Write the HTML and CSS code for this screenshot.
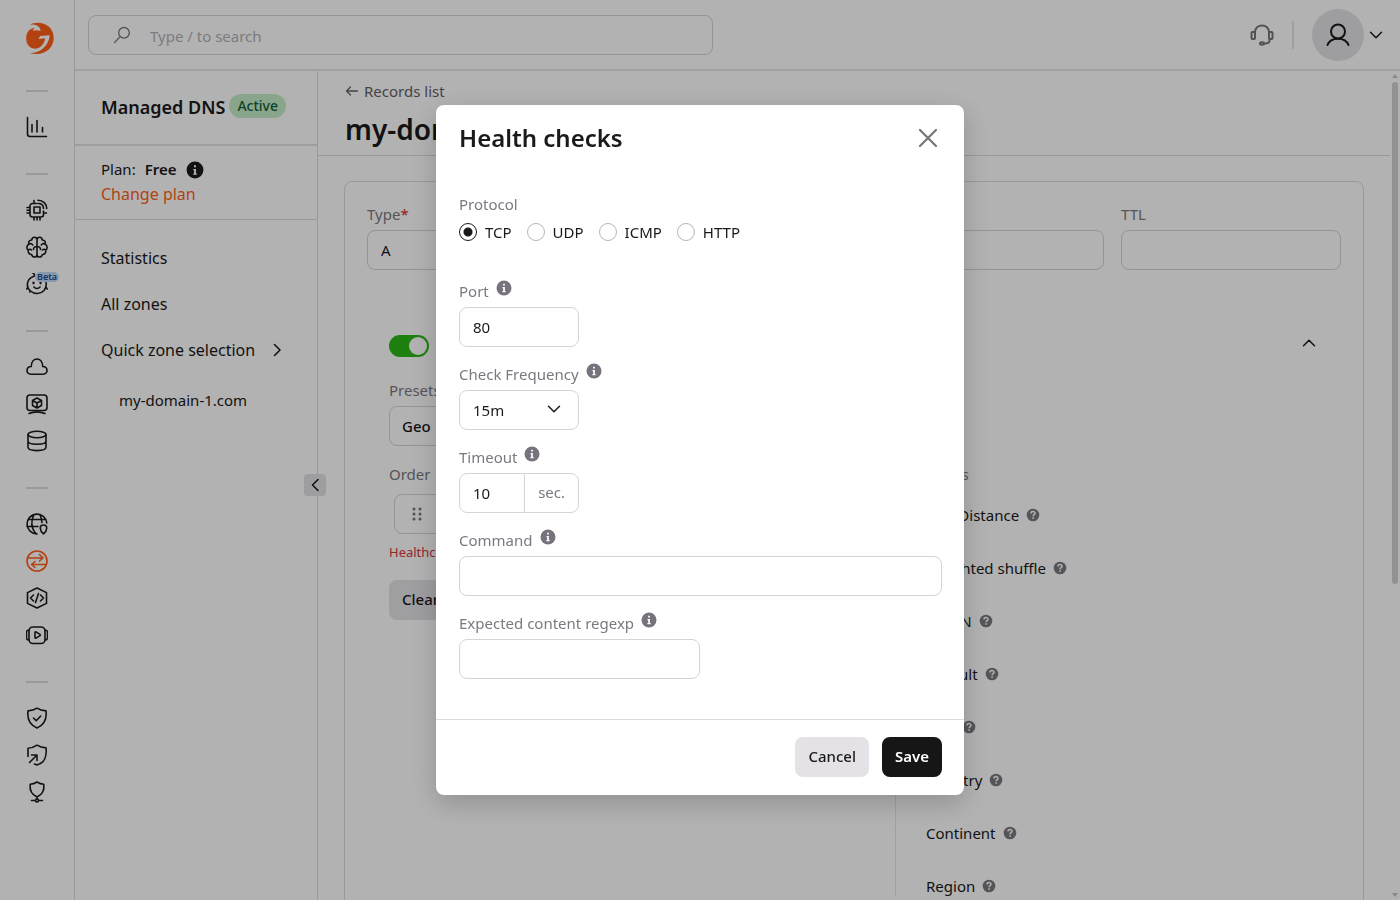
FILE: index.html
```html
<!DOCTYPE html>
<html lang="en">
<head>
<meta charset="utf-8">
<meta name="viewport" content="width=device-width, initial-scale=1">
<title>Managed DNS</title>
<link rel="stylesheet" href="styles.css">
</head>
<body>
<svg class="sprite" aria-hidden="true">
  <symbol id="info" viewBox="0 0 16 16"><circle cx="8" cy="8" r="7.500" fill="currentColor"/><path d="M7.100 3.800h1.800v1.700H7.100zM6.500 7h2.400v4h.7v1.200H6.400V11h.8V8.200h-.7z" fill="#fff"/></symbol>
  <symbol id="help" viewBox="0 0 14 14"><circle cx="7" cy="7" r="6.300" fill="currentColor"/><path d="M5 5.500c0-2.500 4-2.500 4-.2 0 1.300-1.900 1.400-1.900 2.900" fill="none" stroke="#fff" stroke-width="1.500"/><path d="M6.300 9.200h1.600v1.500H6.300z" fill="#fff"/></symbol>
  <symbol id="down" viewBox="0 0 14 14"><path d="M1.500 4.300 7 9.800l5.500-5.500" fill="none" stroke="currentColor" stroke-width="1.500" stroke-linecap="round" stroke-linejoin="round"/></symbol>
</svg>

<div class="app">
  <nav class="rail" aria-label="Products">
    <a class="logo" href="#" aria-label="Home">
      <svg width="30" height="34" viewBox="0 0 30 34"><path d="M4 3.800C14-1.500 28.700 3 28.700 17 28.700 28 18 36 4.500 32 15 32.500 23.500 25 24.800 14.200L15 15l-1.500 3 6.700-.8C19 25 13 28.500 8.500 27.500 3.500 26.500 1.200 22 1.200 17.500 1.200 11.500 4.500 7.500 9.500 6.800c-1 1-1.500 2-1.500 3 2.500-.8 5-.8 7.500.2C15.500 5.500 11 2.800 4 3.800z" fill="#ff5f18"/></svg>
    </a>
    <hr>
    <div class="group">
      <a href="#" aria-label="Reports"><svg viewBox="0 0 22 22"><path d="M1.500 1.500V18a2.500 2.500 0 0 0 2.500 2.500h16.500M6 8.500V16M11 4.500V16M16.500 11.500V16"/></svg></a>
    </div>
    <hr>
    <div class="group">
      <a href="#" aria-label="Edge compute"><svg viewBox="0 0 22 22"><path d="M10.500 4.500H6.500a2.500 2.500 0 0 0-2.500 2.500v8.500A2.500 2.500 0 0 0 6.500 18h8.500a2.500 2.500 0 0 0 2.500-2.500V12M8 8h6v6H8zM1 8.500h3M1 11.300h3M1 14h3M8 18v3M11 18v3M14 18v3M8 1.500v3M17.500 14h3M12 1.300c5 0 8.700 3.500 8.700 8.200M12 4.500c3.300 0 5.500 2 5.500 5"/></svg></a>
      <a href="#" aria-label="AI"><svg viewBox="0 0 22 22"><path d="M11 3.500C10.500.5 6 .5 5.800 4 3 4 2 6.500 3.200 8 0 9.500.5 13 2.300 14c-.5 3 1.200 4.500 3.300 4.500.9 3.500 5.400 3.200 5.400 0zM11 3.500C11.500.5 16 .5 16.200 4 19 4 20 6.500 18.800 8c3.200 1.500 2.700 5 .9 6 .5 3-1.200 4.500-3.300 4.500-.9 3.500-5.400 3.200-5.400 0zM3.200 8c1.500-.8 3-.2 3.500 1M18.800 8c-1.500-.8-3-.2-3.500 1M11 10.500c-2 0-3.500 1-3.500 3M11 10.500c2 0 3.500 1 3.500 3M2.300 14c1.200-1 2.500-.8 3.200 0M19.700 14c-1.200-1-2.500-.8-3.200 0"/></svg></a>
      <a href="#" aria-label="Everywhere inference" class="has-beta"><svg viewBox="0 0 22 22"><path d="M8 3.200C.5 5.500-.5 14 4.500 18c4 3.600 10 3.300 13.500-.5 2-2.500 2.700-5 2-8M8 3.200C9 2.500 8.200.5 7 .2M1.800 14.500.8 16M4.500 18l-.8 1M20.200 14.500l1 1.500M8 14c1.500 2 4.500 2 6 0"/><path d="M7.500 9.500v.8M14.500 9.500v.8" stroke-width="2.200"/></svg><span class="beta">Beta</span></a>
    </div>
    <hr>
    <div class="group">
      <a href="#" aria-label="Cloud"><svg viewBox="0 0 22 22"><path d="M5 18.200c-5.500 0-5.300-7.500.3-7.700C5.500.5 16.500.5 16.700 10.500c5.600.2 5.800 7.700.3 7.700z"/></svg></a>
      <a href="#" aria-label="Virtual machines"><svg viewBox="0 0 22 22"><rect x="1" y="2" width="20" height="15.500" rx="3"/><path d="M3 20.500c5-2 11-2 16 0M11 5l4.500 2.500v5L11 15l-4.500-2.500v-5zM6.500 7.500 11 10l4.500-2.500M11 10v5"/></svg></a>
      <a href="#" aria-label="Storage"><svg viewBox="0 0 22 22"><ellipse cx="11" cy="4.500" rx="9" ry="3.300"/><path d="M2 4.500v12.800c0 4.400 18 4.400 18 0V4.500M2 11c0 4.400 18 4.400 18 0"/></svg></a>
    </div>
    <hr>
    <div class="group">
      <a href="#" aria-label="CDN"><svg viewBox="0 0 22 22"><path d="M20.800 10A9.900 9.900 0 1 0 11 20.900M2.500 6.500h17M1 13.500h11M8 1.500c-3 6-3 13 1.500 19M14 1.500c1 2.500 1.800 5 1.900 8"/><path d="M17.500 12c4.600 0 4 5.500 0 8.800-4-3.300-4.600-8.800 0-8.800z"/></svg></a>
      <a href="#" aria-label="Managed DNS" class="current"><svg viewBox="0 0 22 22"><circle cx="11" cy="11" r="10"/><path d="M2.500 8h14.500M13.500 4.500 17 8l-3.500 3M19.500 14.500H5.500M9 11.500l-3.500 3L9 17.500"/></svg></a>
      <a href="#" aria-label="FastEdge"><svg viewBox="0 0 22 22"><path d="M11 1 20.500 5.600v10.800L11 21 1.500 16.400V5.600zM7.500 8l-3 3 3 3M14.500 8l3 3-3 3M12.500 6.500l-3 9"/></svg></a>
      <a href="#" aria-label="Streaming"><svg viewBox="0 0 22 22"><rect x="3" y="3" width="16" height="16.500" rx="4"/><path d="M3 6C0 6 .5 8 .5 11s-.5 5 2.500 5M19 6c3 0 2.500 2 2.500 5s.5 5-2.500 5M9 8.500c0-.6.500-.9 1-.6l4 2.500c.5.300.5.900 0 1.200l-4 2.500c-.5.300-1 0-1-.6z"/></svg></a>
    </div>
    <hr>
    <div class="group">
      <a href="#" aria-label="Web protection"><svg viewBox="0 0 22 22"><path d="M11 1.200c2.800 1.800 5.800 2.500 9 2.700 1 8.200-1.500 14-9 17-7.500-3-10-8.800-9-17 3.200-.2 6.200-.9 9-2.700zM7.500 11l2.700 2.700 4.500-4.700"/></svg></a>
      <a href="#" aria-label="DDoS protection"><svg viewBox="0 0 22 22"><path d="M2 12.500V4.200c3.200 0 6-.9 9-3 2.800 1.800 5.800 2.500 9 2.700 1 8.200-1.500 15.500-9 17l-2.500-.9M3.500 18.500l7.500-7.500M5.500 11H11v5.500"/></svg></a>
      <a href="#" aria-label="Network protection"><svg viewBox="0 0 22 22"><path d="M11 1c2.200 1.500 4 2.200 6.800 2.300.8 6-1.500 10.200-6.800 12.700-5.300-2.500-7.600-6.700-6.800-12.700C7 3.200 8.800 2.500 11 1zM11 16v2M5.500 19.500h3.800M12.700 19.500h3.800"/><circle cx="11" cy="19.500" r="1.500"/></svg></a>
    </div>
  </nav>

  <div class="workspace">
    <header class="topbar">
      <label class="search">
        <svg width="18" height="18" viewBox="0 0 18 18"><circle cx="11" cy="6.800" r="5.300"/><path d="M7.200 10.600 1.500 16.500"/></svg>
        <input type="search" placeholder="Type / to search" aria-label="Search">
      </label>
      <div class="tools">
        <button class="plain" aria-label="Support"><svg class="headset" width="24" height="24" viewBox="0 0 24 24"><path d="M5 9.500C4.500.2 19.500.2 19 9.500M19.500 16v1.500c0 2.500-2 3-5 3"/><rect x="1.500" y="9" width="3.500" height="7" rx="1"/><rect x="19" y="9" width="3.500" height="7" rx="1"/><ellipse cx="12" cy="20.500" rx="2" ry="1.200"/></svg></button>
        <span class="rule"></span>
        <button class="plain account" aria-label="Account">
          <span class="avatar"><svg width="24" height="24" viewBox="0 0 24 24"><circle cx="12" cy="8.500" r="7"/><path d="M1.500 22c3-8.500 18-8.500 21 0"/></svg></span>
          <svg width="14" height="14"><use href="#down"/></svg>
        </button>
      </div>
    </header>

    <div class="columns">
      <aside class="sidebar">
        <div class="product"><h2>Managed DNS</h2><span class="status">Active</span></div>
        <div class="plan">
          <p>Plan: <strong>Free</strong><svg width="18" height="18"><use href="#info"/></svg></p>
          <a href="#">Change plan</a>
        </div>
        <ul class="menu">
          <li><a href="#">Statistics</a></li>
          <li><a href="#">All zones</a></li>
          <li><a href="#">Quick zone selection <svg width="14" height="14" viewBox="0 0 14 14"><path d="m4.500 1.500 5.500 5.500-5.500 5.500"/></svg></a></li>
          <li class="child"><a href="#">my-domain-1.com</a></li>
        </ul>
        <button class="collapse" aria-label="Collapse menu"><svg width="14" height="14" viewBox="0 0 14 14"><path d="M10 1.500 4.500 7l5.500 5.500"/></svg></button>
      </aside>

      <main class="main">
        <div class="page-head">
          <a href="#"><svg width="14" height="12" viewBox="0 0 14 12"><path d="M12.500 6H1.500M5.500 2l-4 4 4 4"/></svg>Records list</a>
          <h1>my-domain-1.com</h1>
        </div>
        <section class="card">
          <div class="record">
            <div class="field"><label for="type">Type<b>*</b></label><input id="type" value="A"></div>
            <div class="field"><label for="name">Name</label><input id="name"></div>
            <div class="field"><label for="ttl">TTL</label><input id="ttl"></div>
          </div>
          <div class="balancing">
            <div class="balancing-head">
              <label class="toggle"><input type="checkbox" checked aria-label="Advanced load balancing"><span></span></label>
              <button class="plain" aria-label="Collapse"><svg class="up" width="14" height="14"><use href="#down"/></svg></button>
            </div>
            <div class="panes">
              <div class="pane">
                <div class="field"><label for="preset">Presets</label><input id="preset" class="medium" value="Geo"></div>
                <span class="caption">Order</span>
                <div class="drag"><svg width="10" height="14" viewBox="0 0 10 14"><circle cx="2" cy="2" r="1.500"/><circle cx="8" cy="2" r="1.500"/><circle cx="2" cy="7" r="1.500"/><circle cx="8" cy="7" r="1.500"/><circle cx="2" cy="12" r="1.500"/><circle cx="8" cy="12" r="1.500"/></svg></div>
                <p class="error">Healthchecks</p>
                <button class="soft">Clear</button>
              </div>
              <div class="pane filters">
                <span class="caption">Filters</span>
                <ul>
                  <li>Geo Distance<svg width="14" height="14"><use href="#help"/></svg></li>
                  <li>Weighted shuffle<svg width="14" height="14"><use href="#help"/></svg></li>
                  <li>First N<svg width="14" height="14"><use href="#help"/></svg></li>
                  <li>Default<svg width="14" height="14"><use href="#help"/></svg></li>
                  <li>ASN<svg width="14" height="14"><use href="#help"/></svg></li>
                  <li>Country<svg width="14" height="14"><use href="#help"/></svg></li>
                  <li>Continent<svg width="14" height="14"><use href="#help"/></svg></li>
                  <li>Region<svg width="14" height="14"><use href="#help"/></svg></li>
                </ul>
              </div>
            </div>
          </div>
        </section>
      </main>
      <div class="scrollbar" aria-hidden="true"><i class="arrow-up"></i><i class="thumb"></i><i class="arrow-down"></i></div>
    </div>
  </div>
</div>

<div class="overlay">
  <form class="modal" role="dialog" aria-labelledby="modal-title">
    <header>
      <h2 id="modal-title">Health checks</h2>
      <button type="button" class="plain" aria-label="Close"><svg width="20" height="20" viewBox="0 0 20 20"><path d="m2 2 16 16M18 2 2 18"/></svg></button>
    </header>
    <div class="body">
      <fieldset>
        <legend>Protocol</legend>
        <div class="radios">
          <label><input type="radio" name="protocol" checked>TCP</label>
          <label><input type="radio" name="protocol">UDP</label>
          <label><input type="radio" name="protocol">ICMP</label>
          <label><input type="radio" name="protocol">HTTP</label>
        </div>
      </fieldset>
      <div class="field small"><label for="port">Port<svg width="16" height="16"><use href="#info"/></svg></label><input id="port" value="80"></div>
      <div class="field small"><label for="freq">Check Frequency<svg width="16" height="16"><use href="#info"/></svg></label>
        <div class="select"><select id="freq"><option>15m</option></select><svg width="14" height="14"><use href="#down"/></svg></div></div>
      <div class="field small"><label for="timeout">Timeout<svg width="16" height="16"><use href="#info"/></svg></label>
        <div class="unit"><input id="timeout" value="10"><span>sec.</span></div></div>
      <div class="field"><label for="command">Command<svg width="16" height="16"><use href="#info"/></svg></label><input id="command"></div>
      <div class="field half"><label for="regexp">Expected content regexp<svg width="16" height="16"><use href="#info"/></svg></label><input id="regexp"></div>
    </div>
    <footer><button type="button" class="soft">Cancel</button><button type="button" class="solid">Save</button></footer>
  </form>
</div>
</body>
</html>
```
FILE: styles.css
```css
:root {
  --ink: #1a1a1a;
  --muted: #7b7980;
  --line: #dcdcde;
  --accent: #ff5f18;
}
* { box-sizing: border-box; }
body, h1, h2, p, ul { margin: 0; padding: 0; }
ul { list-style: none; }
body {
  font: 15px/20px "Noto Sans", sans-serif;
  color: var(--ink);
  background: #fff;
}
a { color: inherit; text-decoration: none; }
button, input, select { font: inherit; color: inherit; }
svg { flex: none; display: block; }
.sprite { position: absolute; width: 0; height: 0; }
.plain { border: 0; background: none; padding: 0; display: flex; align-items: center; }

.app { display: flex; height: 100vh; overflow: hidden; }

/* product rail */
.rail {
  width: 75px;
  flex: none;
  border-right: 1px solid var(--line);
  padding-top: 21px;
  display: flex;
  flex-direction: column;
  align-items: center;
}
.rail hr { width: 22px; height: 2px; border: 0; background: var(--line); margin: 35px 0 24px; flex: none; }
.logo { margin-left: 5px; }
.group { display: flex; flex-direction: column; gap: 15px; }
.group svg { width: 22px; height: 22px; }
.group svg, .headset, .avatar svg, .search svg, .menu svg, .collapse svg, .page-head svg, .modal header svg {
  fill: none;
  stroke: currentColor;
  stroke-width: 1.6;
  stroke-linecap: round;
  stroke-linejoin: round;
}
.current { color: var(--accent); }
.has-beta { position: relative; }
.beta {
  position: absolute;
  left: 9px;
  top: -1px;
  padding: 0 2px;
  border-radius: 5px;
  background: #c3dcf9;
  color: #1c4c8c;
  font-size: 9px;
  line-height: 10px;
  font-weight: 600;
}

/* top bar */
.workspace { flex: 1; min-width: 0; display: flex; flex-direction: column; }
.topbar {
  display: flex;
  align-items: center;
  justify-content: space-between;
  height: 71px;
  padding: 0 17px 0 13px;
  border-bottom: 2px solid #e6e6e8;
}
.search {
  display: flex;
  align-items: center;
  gap: 19px;
  width: 625px;
  height: 40px;
  padding-left: 24px;
  border: 1px solid #d5d4d9;
  border-radius: 8px;
  color: #77757c;
}
.search svg { stroke-width: 1.3; }
.search input { flex: 1; border: 0; outline: 0; background: none; padding: 2px 0 0; }
.search input::placeholder { color: #b3b1b8; opacity: 1; }
.tools { display: flex; align-items: center; gap: 18px; }
.headset { color: #77757c; stroke-width: 2; }
.rule { width: 2px; height: 28px; background: #e6e6e8; }
.account { gap: 5px; }
.avatar { width: 52px; height: 52px; border-radius: 50%; background: #e2e1e6; display: grid; place-items: center; }
.avatar svg { stroke-width: 2; }

/* section menu */
.columns { flex: 1; min-height: 0; display: flex; }
.sidebar { width: 243px; flex: none; position: relative; border-right: 1px solid var(--line); font-size: 16px; }
.product { display: flex; align-items: flex-start; gap: 4px; padding: 23px 26px 24px; border-bottom: 2px solid #e2e2e4; }
.product h2 { font-size: 18px; line-height: 26px; font-weight: 600; white-space: nowrap; }
.status { padding: 2px 8px; border-radius: 12px; background: #c5ecc9; color: #17603a; font-size: 14px; font-weight: 500; }
.plan { padding: 12px 26px 13px; border-bottom: 1px solid var(--line); line-height: 24px; }
.plan p { display: flex; align-items: center; gap: 9px; font-size: 15px; line-height: 23px; margin-bottom: 1px; }
.plan strong { font-weight: 600; }
.plan a { color: var(--accent); }
.menu { padding: 28px 26px; display: grid; gap: 26px; }
.menu a { display: flex; align-items: center; gap: 15px; }
.child { padding: 4px 18px; font-size: 15px; }
.collapse {
  position: absolute;
  right: -9px;
  top: 403px;
  width: 22px;
  height: 22px;
  padding: 0;
  display: grid;
  place-items: center;
  border: 0;
  border-radius: 4px;
  background: #e2e2e6;
}

/* record page */
.main { flex: 1; min-width: 0; }
.page-head { padding: 10px 27px 6px; border-bottom: 1px solid var(--line); }
.page-head a { display: flex; align-items: center; gap: 5px; color: #636168; }
.page-head svg { stroke-width: 1.3; }
.page-head h1 { font-size: 28px; line-height: 40px; padding-top: 8px; font-weight: 600; }
.card { margin: 25px 26px 0; border: 1px solid var(--line); border-radius: 8px; padding: 22px; height: 100%; }
.record { display: grid; grid-template-columns: 220px 1fr 220px; gap: 17px; }
.field { display: flex; flex-direction: column; gap: 6px; }
.field > label, .caption { color: var(--muted); display: flex; gap: 7px; line-height: 20px; white-space: nowrap; }
.field b { color: #d8262c; font-weight: 400; margin-left: -7px; }
.field input, .field select {
  width: 100%;
  height: 40px;
  margin: 0;
  padding: 0 13px;
  border: 1px solid #d5d4d9;
  border-radius: 8px;
  background: none;
  outline: 0;
}
.field .medium { font-weight: 500; padding: 0 12px; }
.balancing { padding: 62px 22px 0; }
.balancing-head { display: flex; justify-content: space-between; padding-right: 3px; }
.balancing-head .plain { height: 22px; }
.up { transform: rotate(180deg); }
.toggle { position: relative; width: 40px; height: 22px; margin-top: 3px; }
.toggle input { position: absolute; inset: 0; margin: 0; opacity: 0; }
.toggle span { display: flex; justify-content: flex-end; padding: 2px; border-radius: 11px; background: #2ab816; }
.toggle span::after { content: ""; width: 18px; height: 18px; border-radius: 50%; background: #fff; }
.panes { display: grid; grid-template-columns: 506px 1fr; }
.pane { padding: 23px 22px 0 0; }
.pane .caption { margin-top: 18px; }
.filters { padding: 89px 30px 0; border-left: 1px solid #e6e6e8; }
.drag { margin: 10px 5px 0; height: 40px; padding: 0 17px; display: flex; align-items: center; border: 1px solid #d5d4d9; border-radius: 8px; fill: #77757c; }
.error { color: #d8363c; font-size: 13px; margin: 8px 0 18px; }
.filters ul { padding-top: 21px; display: grid; gap: 33px; }
.filters li { display: flex; align-items: center; gap: 7px; white-space: nowrap; }
.filters svg { color: #7b7980; }
.soft, .solid { height: 40px; padding: 0 13px 2px; border: 0; border-radius: 8px; font-weight: 500; }
.soft { background: #e4e2e7; }
.solid { background: #161616; color: #fff; font-weight: 600; }

.scrollbar { width: 10px; padding: 3px 2px; display: flex; flex-direction: column; align-items: center; }
.thumb { width: 6px; height: 502px; margin: 4px 0 auto; border-radius: 3px; background: #d2d1d6; }
.arrow-up, .arrow-down { border: 3px solid transparent; border-top: 0; border-bottom: 4px solid #c4c4c8; }
.arrow-down { transform: rotate(180deg); }

/* health check dialog */
.overlay { position: fixed; inset: 0; display: grid; place-items: center; background: rgba(0, 0, 0, .3); }
.modal { width: 528px; max-width: 100%; border-radius: 8px; background: #fff; box-shadow: 0 8px 28px rgba(0, 0, 0, .2); }
.modal header { display: flex; align-items: center; justify-content: space-between; padding: 16px 26px 16px 23px; }
.modal header svg { color: #77757c; stroke-width: 2.2; }
.modal h2 { font-size: 24px; line-height: 34px; font-weight: 600; }
.body { padding: 23px 22px 40px 23px; display: flex; flex-direction: column; gap: 17px; }
fieldset { margin: 0 0 22px; padding: 0; border: 0; }
legend { padding: 0; color: var(--muted); }
.radios { display: flex; gap: 15px; padding-top: 8px; }
.radios label { display: flex; align-items: center; gap: 8px; }
.radios input { appearance: none; width: 18px; height: 18px; margin: 0; border: 1px solid #b5b3ba; border-radius: 50%; }
.radios input:checked { border-color: var(--ink); background: radial-gradient(circle, var(--ink) 4px, transparent 5px); }
.field.small > label + * { width: 120px; }
.half input { width: 241px; }
.field > label svg { color: #77727b; margin-top: -1px; }
.select { position: relative; }
.select select { appearance: none; }
.select svg { position: absolute; right: 18px; top: 12px; pointer-events: none; }
.unit { display: flex; border: 1px solid #d5d4d9; border-radius: 8px; }
.unit input { flex: 1; min-width: 0; height: 38px; border: 0; }
.unit span { flex: none; padding: 8px 13px; border-left: 1px solid #d5d4d9; color: var(--muted); }
.modal footer { display: flex; justify-content: flex-end; gap: 13px; padding: 17px 22px 18px; border-top: 1px solid var(--line); }
```
